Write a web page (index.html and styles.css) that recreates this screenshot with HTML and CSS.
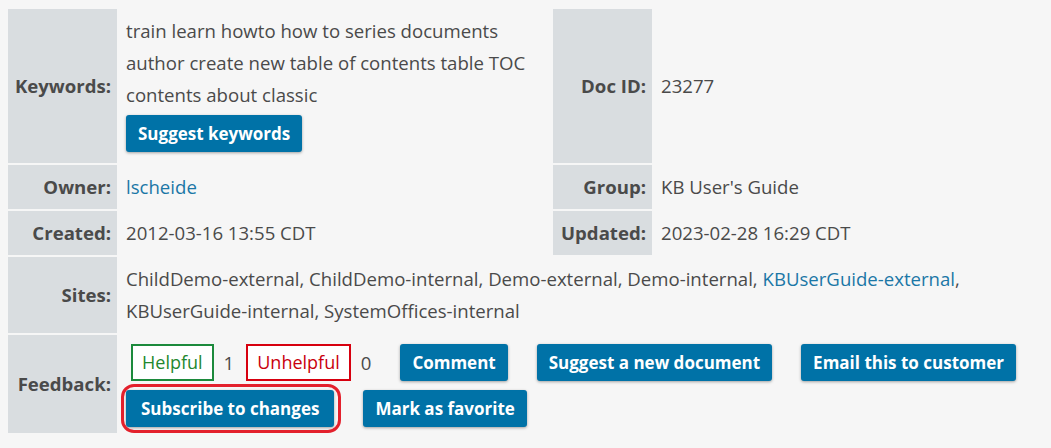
FILE: index.html
```html
<!DOCTYPE html>
<html lang="en">
<head>
<meta charset="utf-8">
<title>Document details</title>
<link rel="stylesheet" href="styles.css">
</head>
<body>
<div class="page">
<table class="meta">
  <colgroup>
    <col class="c-label1">
    <col class="c-value1">
    <col class="c-label2">
    <col class="c-value2">
  </colgroup>
  <tr class="row-kw">
    <th>Keywords:</th>
    <td>
      <div class="kw-text">train learn howto how to series documents<br>author create new table of contents table TOC<br>contents about classic</div>
      <button class="btn btn-kw">Suggest keywords</button>
    </td>
    <th>Doc ID:</th>
    <td>23277</td>
  </tr>
  <tr>
    <th>Owner:</th>
    <td><a class="link" href="#">lscheide</a></td>
    <th>Group:</th>
    <td>KB User's Guide</td>
  </tr>
  <tr>
    <th>Created:</th>
    <td>2012-03-16 13:55 CDT</td>
    <th>Updated:</th>
    <td>2023-02-28 16:29 CDT</td>
  </tr>
  <tr>
    <th>Sites:</th>
    <td colspan="3">ChildDemo-external, ChildDemo-internal, Demo-external, Demo-internal, <a class="link" href="#">KBUserGuide-external</a>,<br>KBUserGuide-internal, SystemOffices-internal</td>
  </tr>
  <tr>
    <th>Feedback:</th>
    <td colspan="3" class="fb-cell">
      <div class="fb">
        <div class="votes">
          <span class="vote vote-yes">Helpful</span>
          <span class="count">1</span>
          <span class="vote vote-no">Unhelpful</span>
          <span class="count count-last">0</span>
        </div>
        <button class="btn">Comment</button>
        <button class="btn">Suggest a new document</button>
        <button class="btn">Email this to customer</button>
        <span class="ring"><button class="btn btn-sub">Subscribe to changes</button></span>
        <button class="btn">Mark as favorite</button>
      </div>
    </td>
  </tr>
</table>
</div>
</body>
</html>
```

FILE: styles.css
```css
html, body {
  margin: 0;
  padding: 0;
  background: #f6f6f6;
}
body {
  font-family: "Open Sans", "Liberation Sans", sans-serif;
  font-size: 18.6px;
  color: #4a4a4a;
}
.page {
  padding: 7px 0 0 6px;
}
.meta {
  border-collapse: separate;
  border-spacing: 2px;
  table-layout: fixed;
  width: 1039px;
}
.c-label1 { width: 109px; }
.c-value1 { width: 432px; }
.c-label2 { width: 99px; }
.meta th {
  background: #d9dde0;
  text-align: right;
  font-weight: 700;
  color: #4a4a4a;
  padding: 6px 6px 6px 0;
  vertical-align: middle;
  line-height: 32px;
  white-space: nowrap;
}
.meta td {
  padding: 6px 7px;
  line-height: 32px;
  vertical-align: middle;
  white-space: nowrap;
}
.link {
  color: #1b77a6;
  text-decoration: none;
}
.btn {
  display: inline-block;
  font-family: "Open Sans", "Liberation Sans", sans-serif;
  font-size: 17px;
  font-weight: 700;
  color: #ffffff;
  background: #0072a7;
  border: 0;
  border-radius: 3px;
  padding: 0 12px;
  height: 37px;
  line-height: 37px;
  box-shadow: 0 1px 3px rgba(0, 0, 0, 0.35);
  cursor: pointer;
}
.btn-kw {
  display: block;
  margin: 4px 0 5px;
}
.btn-sub {
  padding: 0 15px;
}
.fb-cell {
  padding-top: 5px;
  padding-bottom: 6px;
}
.fb {
  display: flex;
  flex-wrap: wrap;
  column-gap: 29px;
  row-gap: 9px;
  padding-top: 3px;
  white-space: nowrap;
}
.votes {
  display: flex;
  align-items: center;
  margin-left: 5px;
}
.vote {
  display: inline-block;
  box-sizing: border-box;
  height: 37px;
  line-height: 33px;
  border: 2px solid;
  background: #ffffff;
  padding: 0 9px;
  font-size: 18px;
}
.vote-yes {
  border-color: #1c8a3c;
  color: #23882f;
}
.vote-no {
  border-color: #d7000f;
  color: #c9000d;
}
.count {
  margin: 0 12px 0 10px;
}
.count-last {
  margin-right: 0;
}
.ring {
  position: relative;
  display: inline-block;
}
.ring::after {
  content: "";
  position: absolute;
  left: -5px;
  right: -7px;
  top: -6px;
  bottom: -6px;
  border: 3px solid #e3202c;
  border-radius: 13px;
  pointer-events: none;
}
```
